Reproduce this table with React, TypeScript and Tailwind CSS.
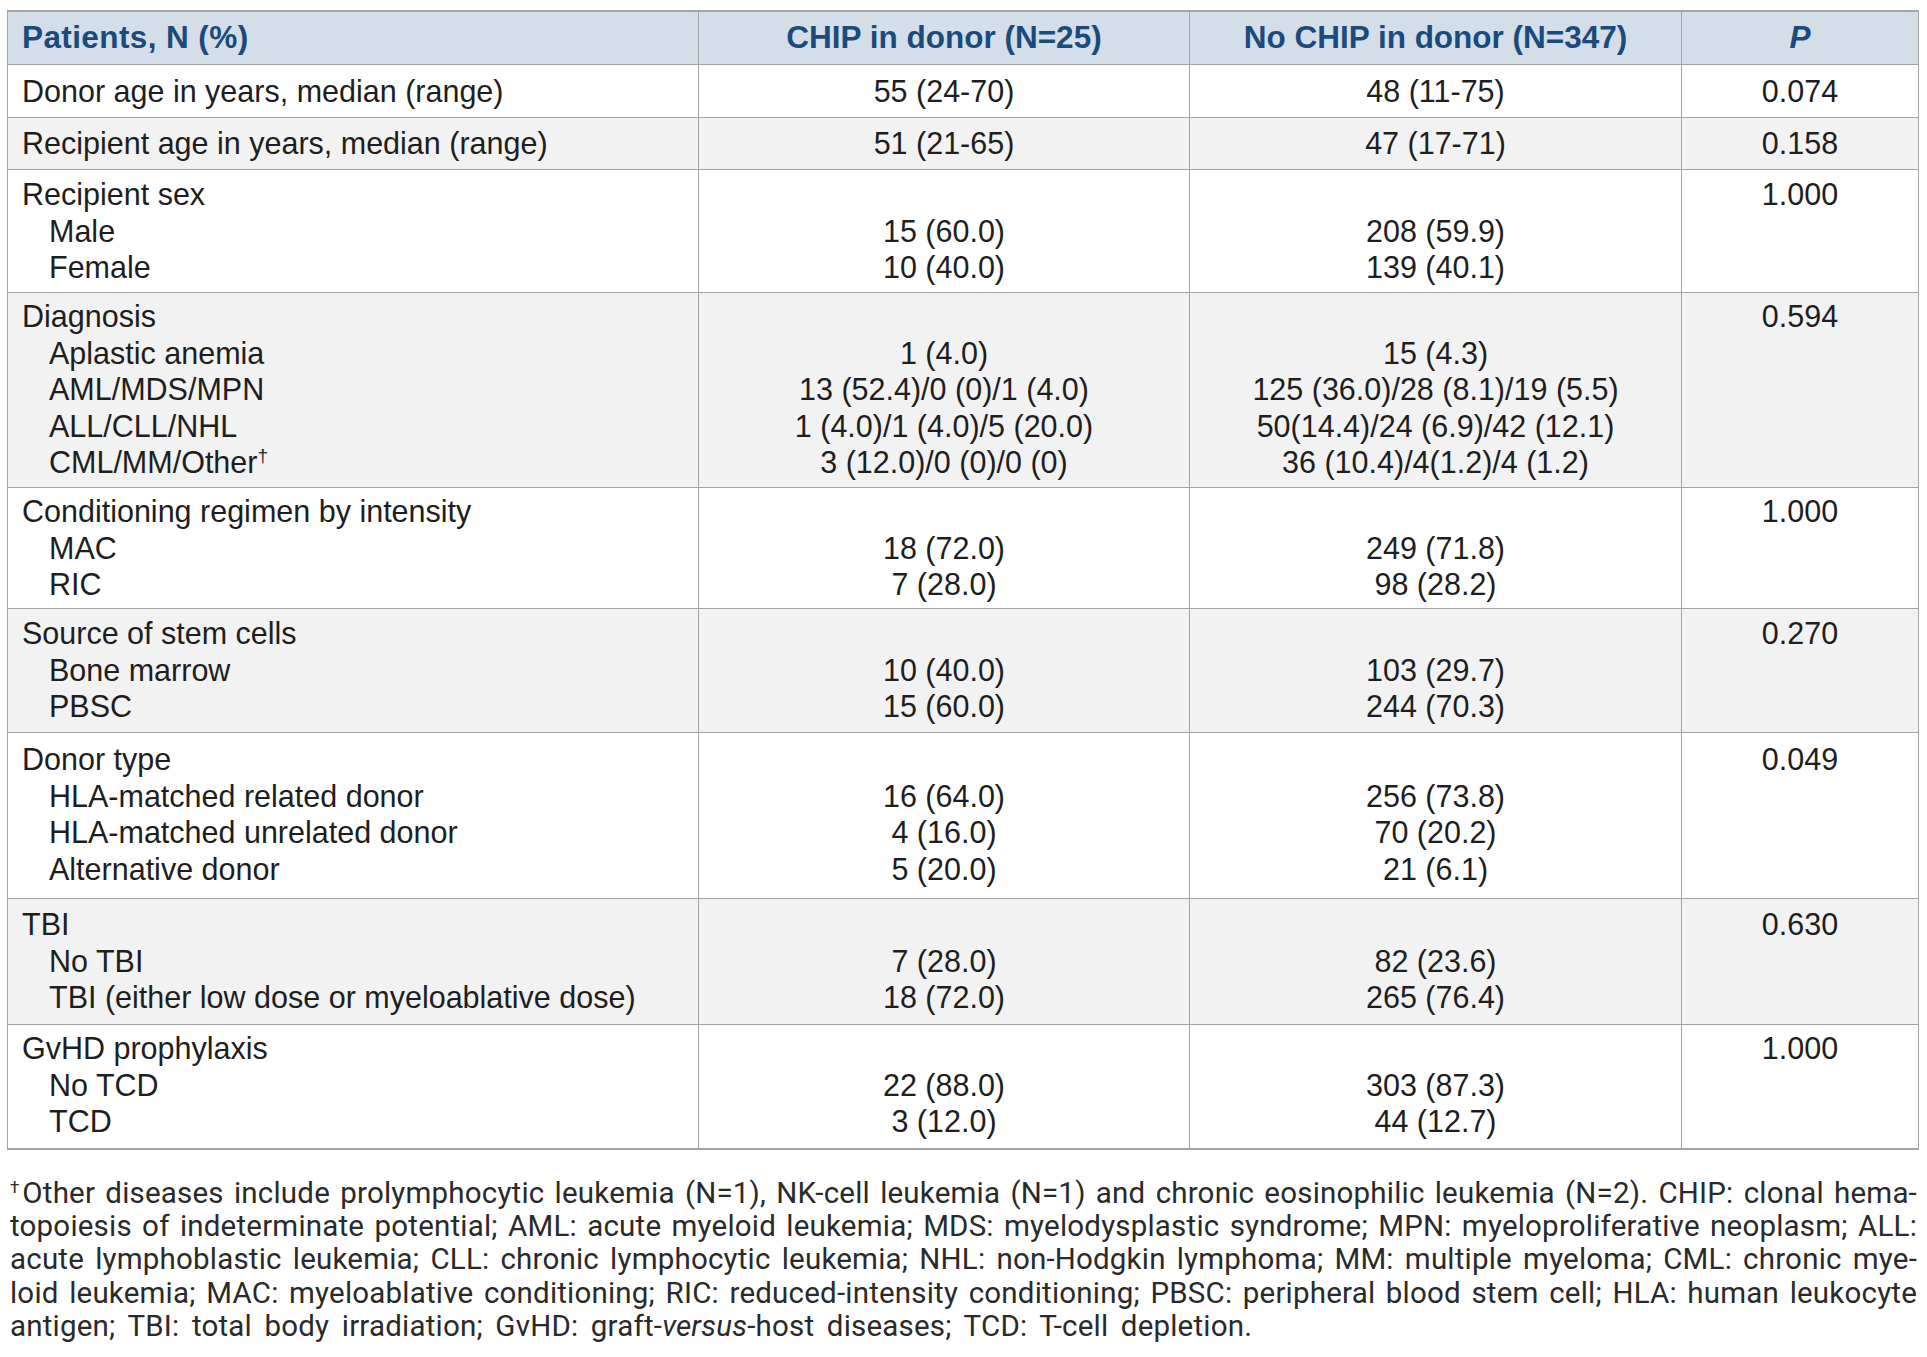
import React from "react";

type Row = {
  h: string;
  pt: string;
  bg: string;
  label: string[];
  sup?: boolean;
  c1: string[];
  c2: string[];
  p: string;
  single?: boolean;
  last?: boolean;
};

const rows: Row[] = [
  { h: "h-[53px]", pt: "pt-0", bg: "bg-white", label: ["Donor age in years, median (range)"], c1: ["55 (24-70)"], c2: ["48 (11-75)"], p: "0.074", single: true },
  { h: "h-[52px]", pt: "pt-0", bg: "bg-[#f2f2f2]", label: ["Recipient age in years, median (range)"], c1: ["51 (21-65)"], c2: ["47 (17-71)"], p: "0.158", single: true },
  { h: "h-[123px]", pt: "pt-[6px]", bg: "bg-white", label: ["Recipient sex", "Male", "Female"], c1: ["", "15 (60.0)", "10 (40.0)"], c2: ["", "208 (59.9)", "139 (40.1)"], p: "1.000" },
  { h: "h-[195px]", pt: "pt-[5px]", bg: "bg-[#f2f2f2]", label: ["Diagnosis", "Aplastic anemia", "AML/MDS/MPN", "ALL/CLL/NHL", "CML/MM/Other"], sup: true, c1: ["", "1 (4.0)", "13 (52.4)/0 (0)/1 (4.0)", "1 (4.0)/1 (4.0)/5 (20.0)", "3 (12.0)/0 (0)/0 (0)"], c2: ["", "15 (4.3)", "125 (36.0)/28 (8.1)/19 (5.5)", "50(14.4)/24 (6.9)/42 (12.1)", "36 (10.4)/4(1.2)/4 (1.2)"], p: "0.594" },
  { h: "h-[121px]", pt: "pt-[5px]", bg: "bg-white", label: ["Conditioning regimen by intensity", "MAC", "RIC"], c1: ["", "18 (72.0)", "7 (28.0)"], c2: ["", "249 (71.8)", "98 (28.2)"], p: "1.000" },
  { h: "h-[124px]", pt: "pt-[6px]", bg: "bg-[#f2f2f2]", label: ["Source of stem cells", "Bone marrow", "PBSC"], c1: ["", "10 (40.0)", "15 (60.0)"], c2: ["", "103 (29.7)", "244 (70.3)"], p: "0.270" },
  { h: "h-[166px]", pt: "pt-[8px]", bg: "bg-white", label: ["Donor type", "HLA-matched related donor", "HLA-matched unrelated donor", "Alternative donor"], c1: ["", "16 (64.0)", "4 (16.0)", "5 (20.0)"], c2: ["", "256 (73.8)", "70 (20.2)", "21 (6.1)"], p: "0.049" },
  { h: "h-[126px]", pt: "pt-[7px]", bg: "bg-[#f2f2f2]", label: ["TBI", "No TBI", "TBI (either low dose or myeloablative dose)"], c1: ["", "7 (28.0)", "18 (72.0)"], c2: ["", "82 (23.6)", "265 (76.4)"], p: "0.630" },
  { h: "h-[125px]", pt: "pt-[5px]", bg: "bg-white", label: ["GvHD prophylaxis", "No TCD", "TCD"], c1: ["", "22 (88.0)", "3 (12.0)"], c2: ["", "303 (87.3)", "44 (12.7)"], p: "1.000", last: true },
];

const body = "font-['Liberation_Sans',Arial,sans-serif] text-[30.5px] text-[#1e1e1e] leading-[36.5px]";

function Lines({ items, center, sup }: { items: string[]; center?: boolean; sup?: boolean }) {
  return (
    <>
      {items.map((t, i) => (
        <div
          key={i}
          className={`${center ? "text-center" : i === 0 ? "pl-[14px]" : "pl-[41px]"} h-[36.5px] whitespace-nowrap`}
        >
          {t}
          {sup && i === items.length - 1 ? (
            <span className="text-[19px] leading-none relative top-[-11px]">†</span>
          ) : null}
        </div>
      ))}
    </>
  );
}

const fl = "h-[33.2px] text-justify [text-align-last:justify] whitespace-nowrap";

export default function App() {
  return (
    <div className="w-[1927px] min-h-[1357px] bg-white pt-[10px]">
      <div className="ml-[7px] w-[1912px] border-x border-[#a4a4a4]">
        <div className="flex h-[55px] border-t-2 border-b border-[#a4a4a4] bg-[#d3dee8] font-['Liberation_Sans',Arial,sans-serif] font-bold text-[31.5px] text-[#1a4b7c]">
          <div className="w-[691px] border-r border-[#a4a4a4] flex items-center pl-[14px] tracking-[0.4px]">Patients, N (%)</div>
          <div className="w-[491px] border-r border-[#a4a4a4] flex items-center justify-center">CHIP in donor (N=25)</div>
          <div className="w-[492px] border-r border-[#a4a4a4] flex items-center justify-center">No CHIP in donor (N=347)</div>
          <div className="flex-1 flex items-center justify-center italic">P</div>
        </div>
        {rows.map((r, idx) => (
          <div
            key={idx}
            className={`flex ${r.h} ${r.bg} ${r.last ? "border-b-2" : "border-b"} border-[#a4a4a4] ${body}`}
          >
            <div className={`w-[691px] border-r border-[#a4a4a4] ${r.single ? "flex flex-col justify-center" : r.pt}`}>
              <Lines items={r.label} sup={r.sup} />
            </div>
            <div className={`w-[491px] border-r border-[#a4a4a4] ${r.single ? "flex flex-col justify-center" : r.pt}`}>
              <Lines items={r.c1} center />
            </div>
            <div className={`w-[492px] border-r border-[#a4a4a4] ${r.single ? "flex flex-col justify-center" : r.pt}`}>
              <Lines items={r.c2} center />
            </div>
            <div className={`flex-1 ${r.single ? "flex flex-col justify-center" : r.pt}`}>
              <Lines items={[r.p]} center />
            </div>
          </div>
        ))}
      </div>
      <div className="ml-[10px] w-[1907px] mt-[27px] font-['Roboto',sans-serif] text-[29.5px] tracking-[0.2px] leading-[33.2px] text-[#2a2a2a]">
        <div className={fl}>
          <span className="text-[17px] leading-none relative top-[-10px]">†</span>Other diseases include prolymphocytic leukemia (N=1), NK-cell leukemia (N=1) and chronic eosinophilic leukemia (N=2). CHIP: clonal hema-
        </div>
        <div className={fl}>
          topoiesis of indeterminate potential; AML: acute myeloid leukemia; MDS: myelodysplastic syndrome; MPN: myeloproliferative neoplasm; ALL:
        </div>
        <div className={fl}>
          acute lymphoblastic leukemia; CLL: chronic lymphocytic leukemia; NHL: non-Hodgkin lymphoma; MM: multiple myeloma; CML: chronic mye-
        </div>
        <div className={fl}>
          loid leukemia; MAC: myeloablative conditioning; RIC: reduced-intensity conditioning; PBSC: peripheral blood stem cell; HLA: human leukocyte
        </div>
        <div className="h-[33.2px] whitespace-nowrap [word-spacing:5px]">
          antigen; TBI: total body irradiation; GvHD: graft-<i>versus</i>-host diseases; TCD: T-cell depletion.
        </div>
      </div>
    </div>
  );
}
